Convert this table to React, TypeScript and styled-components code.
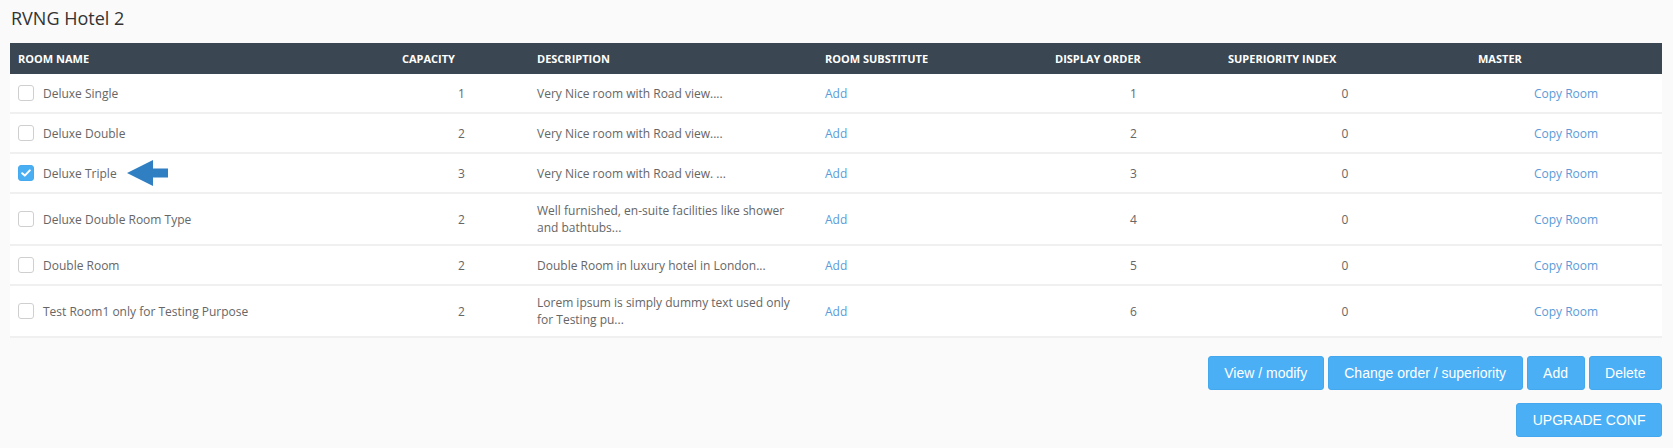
import React from "react";
import styled, { createGlobalStyle } from "styled-components";

const GlobalStyle = createGlobalStyle`
  html, body {
    margin: 0;
    padding: 0;
    background: #fafafa;
  }
  body {
    font-family: "Open Sans", "Noto Sans", sans-serif;
    color: #666;
  }
  * { box-sizing: border-box; }
`;

const Page = styled.div`
  padding: 6px 11px 0 10px;
`;

const Title = styled.h1`
  margin: 0 0 13px 1px;
  font-family: "Open Sans", sans-serif;
  font-weight: 400;
  font-size: 18px;
  line-height: 24px;
  color: #333;
`;

const Table = styled.table`
  width: 100%;
  table-layout: fixed;
  border-collapse: separate;
  border-spacing: 0;
  background: #fff;
`;

const Col = styled.col<{ $w: number }>`
  width: ${(p) => p.$w}px;
`;

const HeadRow = styled.tr`
  height: 31px;
  background: #3a4651;
`;

const Th = styled.th`
  padding: 0 8px;
  text-align: left;
  vertical-align: middle;
  font-family: "Open Sans", sans-serif;
  font-weight: 700;
  font-size: 11px;
  color: #fff;
  white-space: nowrap;
  text-transform: uppercase;
`;

const Row = styled.tr`
  height: 40px;
`;

const Td = styled.td<{ $align?: "left" | "center"; $wrapPad?: boolean }>`
  padding: ${(p) => (p.$wrapPad ? "8px 20px 8px 8px" : "0 8px")};
  text-align: ${(p) => p.$align ?? "left"};
  vertical-align: middle;
  font-size: 12px;
  line-height: 17px;
  color: #666;
  border-bottom: 2px solid #f0f0f0;
`;

const NameCell = styled.div`
  display: flex;
  align-items: center;
  gap: 9px;
`;

const Box = styled.span<{ $checked?: boolean }>`
  flex: none;
  width: 16px;
  height: 16px;
  border-radius: 3px;
  border: 1px solid ${(p) => (p.$checked ? "#46aaf0" : "#cfcfcf")};
  background: ${(p) => (p.$checked ? "#4aaef3" : "#fff")};
  display: inline-flex;
  align-items: center;
  justify-content: center;
`;

const Arrow = styled.svg`
  flex: none;
  margin-left: 1px;
`;

const Link = styled.a`
  color: #5a9bd8;
  text-decoration: none;
  cursor: pointer;
`;

const Actions = styled.div`
  display: flex;
  justify-content: flex-end;
  gap: 4px;
  margin-top: 18px;
  & + & {
    margin-top: 13px;
  }
`;

const Button = styled.button`
  height: 34px;
  padding: 0 15.5px;
  border: 1px solid #44a8ee;
  border-radius: 3px;
  background: #4aaff5;
  color: #fff;
  font-family: "Liberation Sans", Arial, sans-serif;
  font-size: 14px;
  cursor: pointer;
`;

type Room = {
  name: string;
  capacity: number;
  description: string;
  order: number;
  superiority: number;
  checked?: boolean;
};

const rooms: Room[] = [
  { name: "Deluxe Single", capacity: 1, description: "Very Nice room with Road view....", order: 1, superiority: 0 },
  { name: "Deluxe Double", capacity: 2, description: "Very Nice room with Road view....", order: 2, superiority: 0 },
  { name: "Deluxe Triple", capacity: 3, description: "Very Nice room with Road view. ...", order: 3, superiority: 0, checked: true },
  { name: "Deluxe Double Room Type", capacity: 2, description: "Well furnished, en-suite facilities like shower and bathtubs...", order: 4, superiority: 0 },
  { name: "Double Room", capacity: 2, description: "Double Room in luxury hotel in London...", order: 5, superiority: 0 },
  { name: "Test Room1 only for Testing Purpose", capacity: 2, description: "Lorem ipsum is simply dummy text used only for Testing pu...", order: 6, superiority: 0 },
];

const widths = [384, 135, 288, 230, 173, 250, 192];
const headers = ["Room Name", "Capacity", "Description", "Room Substitute", "Display Order", "Superiority Index", "Master"];

const Check = () => (
  <svg width="10" height="8" viewBox="0 0 10 8">
    <path d="M1.2 4.2 L3.8 6.6 L8.8 1.4" fill="none" stroke="#fff" strokeWidth="2" strokeLinecap="round" strokeLinejoin="round" />
  </svg>
);

const PointerArrow = () => (
  <Arrow width="41" height="26" viewBox="0 0 41 26">
    <polygon points="0,13 26,0 26,8.5 41,8.5 41,17.5 26,17.5 26,26" fill="#2f7fc2" />
  </Arrow>
);

export default function App() {
  return (
    <>
      <GlobalStyle />
      <Page>
        <Title>RVNG Hotel 2</Title>
        <Table>
          <colgroup>
            {widths.map((w, i) => (
              <Col key={i} $w={w} />
            ))}
          </colgroup>
          <thead>
            <HeadRow>
              {headers.map((h) => (
                <Th key={h}>{h}</Th>
              ))}
            </HeadRow>
          </thead>
          <tbody>
            {rooms.map((r) => (
              <Row key={r.name}>
                <Td>
                  <NameCell>
                    <Box $checked={r.checked}>{r.checked && <Check />}</Box>
                    <span>{r.name}</span>
                    {r.checked && <PointerArrow />}
                  </NameCell>
                </Td>
                <Td $align="center">{r.capacity}</Td>
                <Td $wrapPad>{r.description}</Td>
                <Td>
                  <Link>Add</Link>
                </Td>
                <Td $align="center">{r.order}</Td>
                <Td $align="center">{r.superiority}</Td>
                <Td $align="center">
                  <Link>Copy Room</Link>
                </Td>
              </Row>
            ))}
          </tbody>
        </Table>
        <Actions>
          <Button>View / modify</Button>
          <Button>Change order / superiority</Button>
          <Button>Add</Button>
          <Button>Delete</Button>
        </Actions>
        <Actions>
          <Button>UPGRADE CONF</Button>
        </Actions>
      </Page>
    </>
  );
}
